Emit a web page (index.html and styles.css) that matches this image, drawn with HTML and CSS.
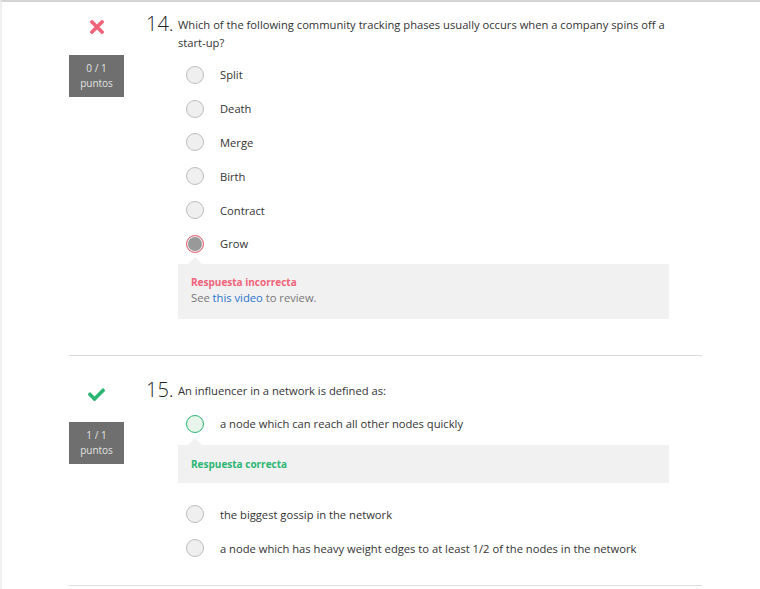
FILE: index.html
```html
<!DOCTYPE html>
<html>
<head>
<meta charset="utf-8">
<link rel="stylesheet" href="styles.css">
</head>
<body>
<div class="page">
  <section class="question q1">
    <div class="side">
      <svg class="mark" width="14" height="14" viewBox="0 0 14 14"><path d="M2 2 L12 12 M12 2 L2 12" stroke="#f0647a" stroke-width="3.6" stroke-linecap="square"/></svg>
      <div class="badge">0 / 1<br>puntos</div>
    </div>
    <div class="main">
      <div class="header">
        <span class="num">14.</span>
        <p class="qtext">Which of the following community tracking phases usually occurs when a company spins off a start-up?</p>
      </div>
      <ul class="options">
        <li class="option"><span class="radio"></span><span class="label">Split</span></li>
        <li class="option"><span class="radio"></span><span class="label">Death</span></li>
        <li class="option"><span class="radio"></span><span class="label">Merge</span></li>
        <li class="option"><span class="radio"></span><span class="label">Birth</span></li>
        <li class="option"><span class="radio"></span><span class="label">Contract</span></li>
        <li class="option"><span class="radio radio-wrong"></span><span class="label">Grow</span></li>
      </ul>
      <div class="feedback feedback-wrong">
        <div class="fb-title wrong">Respuesta incorrecta</div>
        <div class="fb-text">See <a href="#" class="link">this video</a> to review.</div>
      </div>
    </div>
  </section>
  <hr class="divider">
  <section class="question q2">
    <div class="side">
      <svg class="mark check" width="17" height="13" viewBox="0 0 17 13"><path d="M2 6.5 L6.5 11 L15 2.5" fill="none" stroke="#2bb673" stroke-width="3.6" stroke-linecap="square"/></svg>
      <div class="badge badge2">1 / 1<br>puntos</div>
    </div>
    <div class="main">
      <div class="header">
        <span class="num">15.</span>
        <p class="qtext">An influencer in a network is defined as:</p>
      </div>
      <ul class="options">
        <li class="option"><span class="radio radio-right"></span><span class="label">a node which can reach all other nodes quickly</span></li>
      </ul>
      <div class="feedback feedback-right">
        <div class="fb-title right">Respuesta correcta</div>
      </div>
      <ul class="options options-after">
        <li class="option"><span class="radio"></span><span class="label">the biggest gossip in the network</span></li>
        <li class="option"><span class="radio"></span><span class="label">a node which has heavy weight edges to at least 1/2 of the nodes in the network</span></li>
      </ul>
    </div>
  </section>
  <hr class="divider divider-last">
</div>
</body>
</html>
```

FILE: styles.css
```css
* { box-sizing: border-box; }
html, body { margin: 0; padding: 0; background: #fff; }
body { font-family: "Open Sans", "DejaVu Sans", sans-serif; color: #333; }
.page {
  width: 760px;
  height: 589px;
  border-top: 2px solid #d4d4d4;
  border-left: 2px solid #efefef;
  overflow: hidden;
}
.question {
  display: flex;
  margin-left: 67px;
  width: 633px;
}
.q1 { padding-top: 14px; }
.q2 { padding-top: 26px; }
.side {
  width: 55px;
  display: flex;
  flex-direction: column;
  align-items: center;
}
.mark { margin-top: 4px; }
.check { margin-top: 6px; }
.badge {
  margin-top: 21px;
  width: 55px;
  height: 42px;
  background: #6f6f6f;
  color: #e2e2e2;
  font-size: 10px;
  line-height: 15px;
  padding-top: 6px;
  text-align: center;
}
.main {
  margin-left: 22px;
  width: 523px;
}
.header {
  display: flex;
  align-items: flex-start;
}
.num {
  width: 32px;
  flex: none;
  margin-top: -1px;
  font-size: 20px;
  font-weight: 300;
  line-height: 18px;
  color: #222;
}
.qtext {
  margin: 0;
  width: 491px;
  font-size: 11.2px;
  line-height: 18px;
  color: #333;
}
.options {
  list-style: none;
  margin: 0;
  padding: 0 0 0 40px;
}
.q1 .options { margin-top: 6px; }
.q2 .options { margin-top: 7px; }
.option {
  display: flex;
  align-items: center;
  height: 33.8px;
}
.radio {
  width: 18px;
  height: 18px;
  border-radius: 50%;
  border: 1px solid #bdbdbd;
  background: #efefef;
  flex: none;
}
.radio-wrong {
  border: 1.5px solid #f0647a;
  background: #999;
  box-shadow: inset 0 0 0 1px #f4f4f4;
}
.radio-right {
  border: 1.5px solid #2bb673;
  background: #e8f5ec;
}
.label {
  margin-left: 16px;
  font-size: 11.2px;
  color: #333;
}
.feedback {
  position: relative;
  width: 491px;
  margin-left: 32px;
  background: #f1f1f1;
  margin-top: 3px;
}
.feedback::before {
  content: "";
  position: absolute;
  left: 10px;
  top: -7px;
  border-left: 7px solid transparent;
  border-right: 7px solid transparent;
  border-bottom: 7px solid #f1f1f1;
}
.feedback-wrong {
  height: 55px;
  padding: 10px 13px 0;
}
.feedback-right {
  height: 38px;
  padding: 11px 13px 0;
  margin-top: 4px;
}
.fb-title {
  font-size: 10px;
  font-weight: 700;
  line-height: 16px;
}
.wrong { color: #f0647a; }
.right { color: #2bb673; }
.fb-text {
  font-size: 11.2px;
  line-height: 16px;
  color: #777;
}
.link { color: #2a73cc; text-decoration: none; }
.q2 .options-after { margin-top: 15px; }
.divider {
  margin: 36px 0 0 67px;
  width: 633px;
  border: 0;
  border-top: 1px solid #dcdcdc;
  height: 0;
}
.divider-last { margin-top: 20px; }
```
